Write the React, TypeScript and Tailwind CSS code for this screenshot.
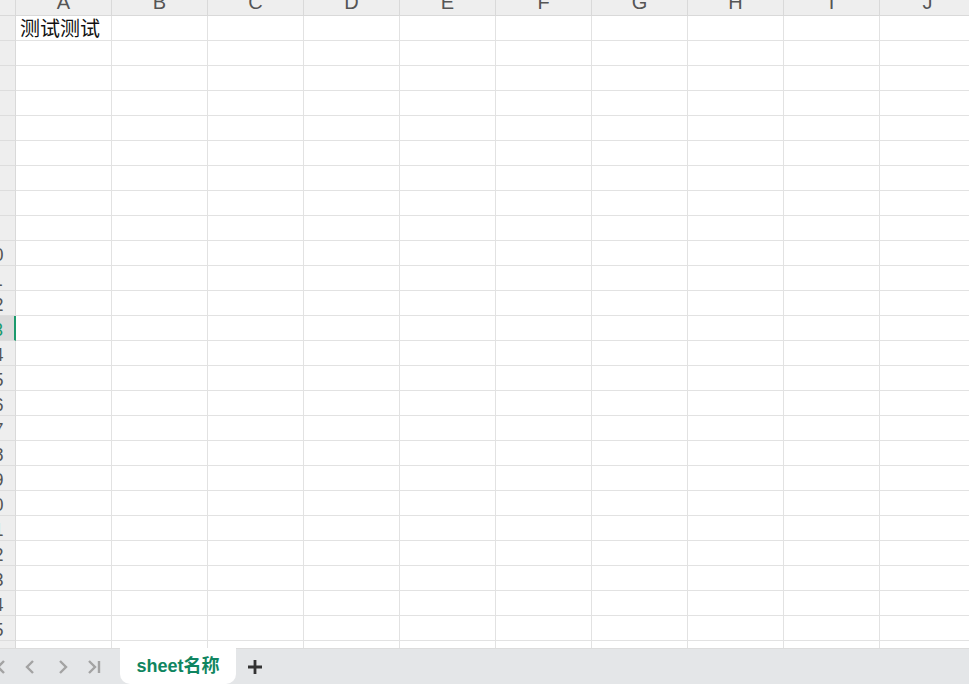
import React from 'react';

const columns = ['A', 'B', 'C', 'D', 'E', 'F', 'G', 'H', 'I', 'J', 'K'];
const rowCount = 27;
const selectedRow = 13;

function NavIcon({ kind }: { kind: 'first' | 'prev' | 'next' | 'last' }) {
  const paths: Record<string, string> = {
    first: 'M16 2 L10 8 L16 14 M5 2 V14',
    prev: 'M12 2 L6 8 L12 14',
    next: 'M6 2 L12 8 L6 14',
    last: 'M2 2 L8 8 L2 14 M12 2 V14',
  };
  return (
    <svg width="18" height="16" viewBox="0 0 18 16" fill="none" stroke="#a3a3a3" strokeWidth="2.4" strokeLinecap="butt" strokeLinejoin="miter">
      <path d={paths[kind]} />
    </svg>
  );
}

export default function App() {
  return (
    <div className="w-[969px] h-[684px] overflow-hidden flex flex-col bg-white font-['Liberation_Sans',Arial,sans-serif]">
      {/* Grid */}
      <div className="flex-1 min-h-0 overflow-hidden">
        <div className="-ml-[27px] -mt-[10px] flex flex-col">
          {/* column headers */}
          <div className="flex">
            <div className="shrink-0 w-[43px] h-[26px] bg-[#eeeeee] border-r border-b border-[#d9d9d9]" />
            {columns.map((c) => (
              <div
                key={c}
                className="shrink-0 w-[96px] h-[26px] bg-[#eeeeee] border-r border-b border-[#d9d9d9] text-center text-[20px] leading-[25px] text-[#555555]"
              >
                {c}
              </div>
            ))}
          </div>

          {/* rows */}
          {Array.from({ length: rowCount }, (_, i) => i + 1).map((r) => {
            const sel = r === selectedRow;
            return (
              <div key={r} className="flex">
                <div
                  className={
                    sel
                      ? 'shrink-0 w-[43px] h-[25px] bg-[#dadada] border-b border-b-[#dddddd] border-r-2 border-r-[#1b9a6c] pr-[1px] text-center text-[18px] leading-[28px] text-[#1b9a6c]'
                      : 'shrink-0 w-[43px] h-[25px] bg-[#eeeeee] border-b border-b-[#dddddd] border-r border-r-[#d9d9d9] pr-[1px] text-center text-[18px] leading-[28px] text-[#555555]'
                  }
                >
                  {r}
                </div>
                {columns.map((c) => (
                  <div
                    key={c}
                    className="shrink-0 w-[96px] h-[25px] border-r border-b border-[#e2e2e2] overflow-hidden"
                  >
                    {r === 1 && c === 'A' && (
                      <span className="block pl-[4px] text-[20px] leading-[24px] text-[#111111] whitespace-nowrap font-['Noto_Sans_CJK_SC','Noto_Sans_CJK_JP',sans-serif]">
                        测试测试
                      </span>
                    )}
                  </div>
                ))}
              </div>
            );
          })}
        </div>
      </div>

      {/* Sheet tabs bar */}
      <div className="h-[36px] shrink-0 flex items-stretch bg-[#e4e6e8]">
        <div className="flex items-center -ml-[20px] w-[140px] shrink-0 border-t border-[#dcdcdc]">
          <div className="w-[33px] flex justify-center"><NavIcon kind="first" /></div>
          <div className="w-[33px] flex justify-center"><NavIcon kind="prev" /></div>
          <div className="w-[33px] flex justify-center"><NavIcon kind="next" /></div>
          <div className="w-[33px] flex justify-center"><NavIcon kind="last" /></div>
        </div>
        <div className="w-[116px] shrink-0 bg-white rounded-b-[10px] flex items-center justify-center">
          <span className="text-[18px] font-bold text-[#0f8560] font-['Liberation_Sans','Noto_Sans_CJK_SC',sans-serif]">
            sheet名称
          </span>
        </div>
        <div className="flex-1 flex items-center border-t border-[#dcdcdc]">
          <div className="w-[38px] flex justify-center">
            <svg width="16" height="16" viewBox="0 0 16 16" fill="none" stroke="#333333" strokeWidth="2.8">
              <path d="M8 1 V15 M1 8 H15" />
            </svg>
          </div>
        </div>
      </div>
    </div>
  );
}
